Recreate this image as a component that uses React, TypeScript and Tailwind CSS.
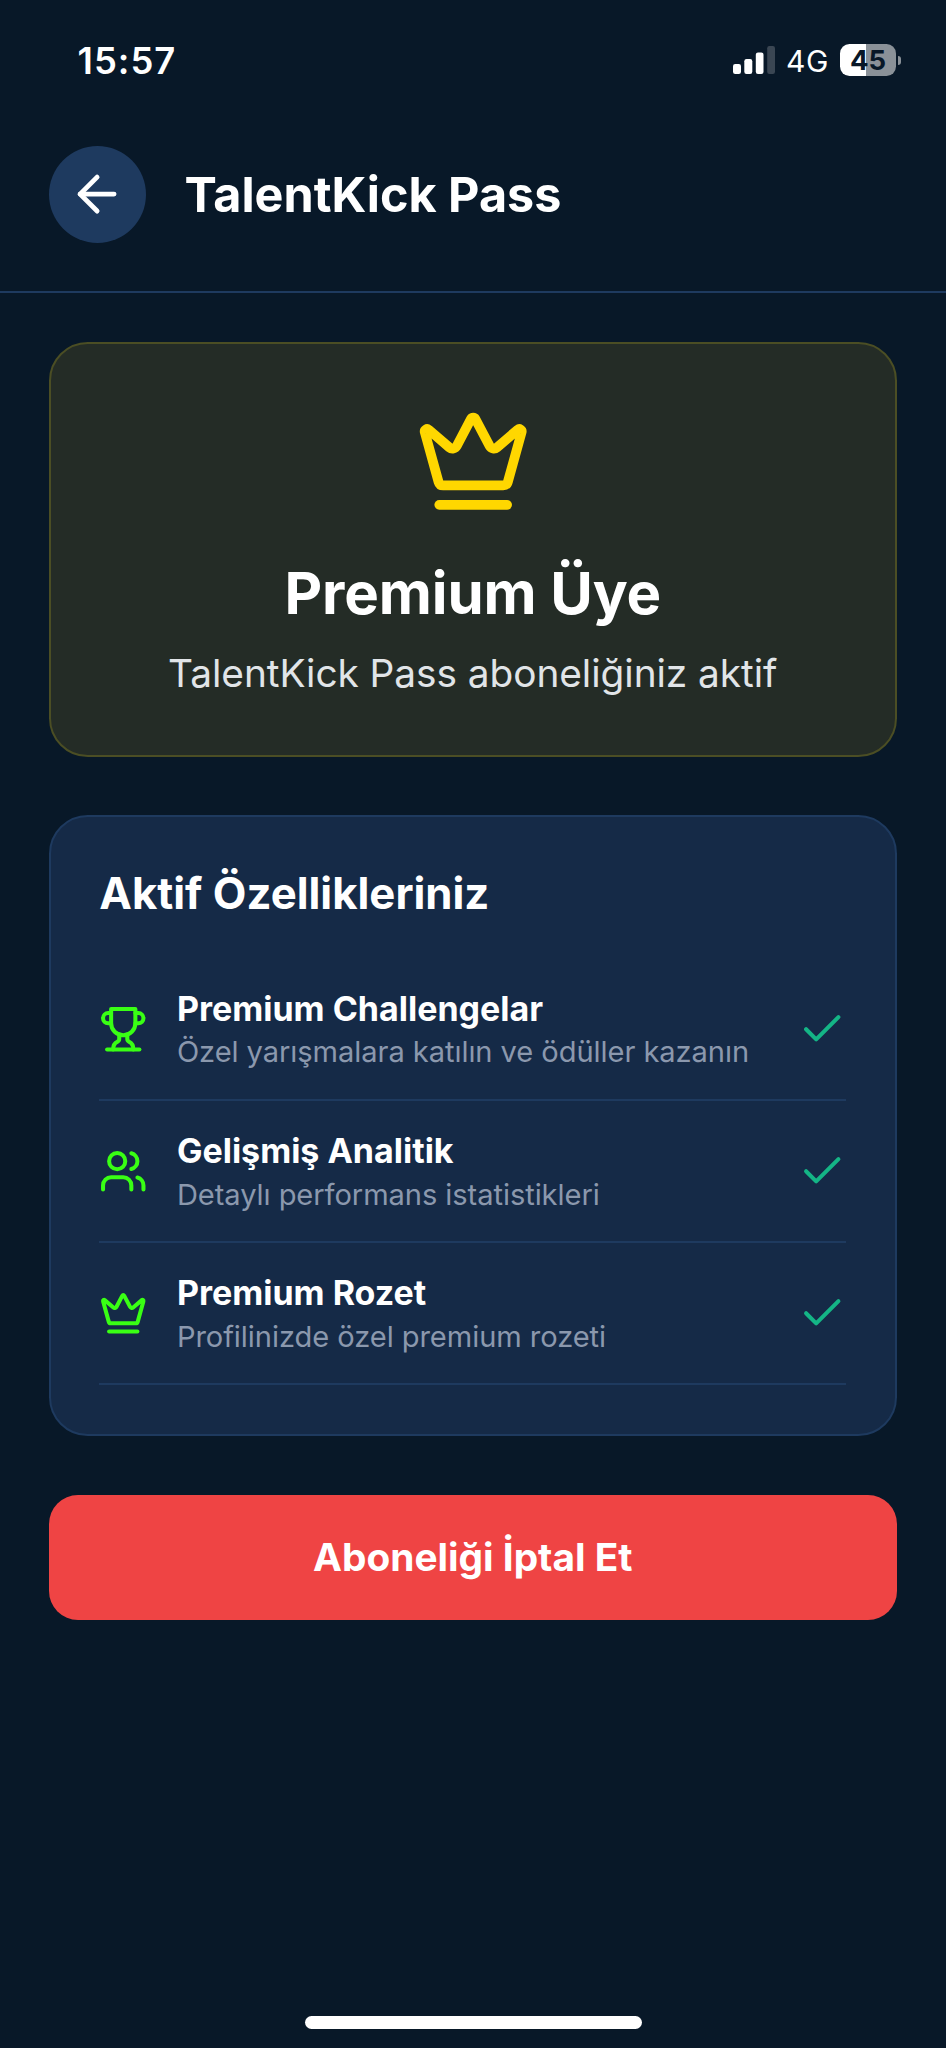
import type { ReactNode } from "react";

type IconProps = { className?: string };

function Icon({ className = "", children }: { className?: string; children: ReactNode }) {
  return (
    <svg
      viewBox="0 0 24 24"
      fill="none"
      stroke="currentColor"
      strokeWidth="2"
      strokeLinecap="round"
      strokeLinejoin="round"
      className={`shrink-0 ${className}`}
    >
      {children}
    </svg>
  );
}

const ArrowLeft = ({ className }: IconProps) => (
  <Icon className={className}>
    <path d="m12 19-7-7 7-7" />
    <path d="M19 12H5" />
  </Icon>
);

const Crown = ({ className }: IconProps) => (
  <Icon className={className}>
    <path d="M11.562 3.266a.5.5 0 0 1 .876 0L15.39 8.87a1 1 0 0 0 1.516.294L21.183 5.5a.5.5 0 0 1 .798.519l-2.834 10.246a1 1 0 0 1-.956.734H5.81a1 1 0 0 1-.957-.734L2.02 6.02a.5.5 0 0 1 .798-.519l4.276 3.664a1 1 0 0 0 1.516-.294z" />
    <path d="M5 21h14" />
  </Icon>
);

const Trophy = ({ className }: IconProps) => (
  <Icon className={className}>
    <path d="M6 9H4.5a2.5 2.5 0 0 1 0-5H6" />
    <path d="M18 9h1.5a2.5 2.5 0 0 0 0-5H18" />
    <path d="M4 22h16" />
    <path d="M10 14.66V17c0 .55-.47.98-.97 1.21C7.85 18.75 7 20.24 7 22" />
    <path d="M14 14.66V17c0 .55.47.98.97 1.21C16.15 18.75 17 20.24 17 22" />
    <path d="M18 2H6v7a6 6 0 0 0 12 0V2Z" />
  </Icon>
);

const Users = ({ className }: IconProps) => (
  <Icon className={className}>
    <path d="M16 21v-2a4 4 0 0 0-4-4H6a4 4 0 0 0-4 4v2" />
    <circle cx="9" cy="7" r="4" />
    <path d="M22 21v-2a4 4 0 0 0-3-3.87" />
    <path d="M16 3.13a4 4 0 0 1 0 7.75" />
  </Icon>
);

const Check = ({ className }: IconProps) => (
  <Icon className={className}>
    <path d="M20 6 9 17l-5-5" />
  </Icon>
);

const features = [
  { icon: Trophy, title: "Premium Challengelar", text: "Özel yarışmalara katılın ve ödüller kazanın" },
  { icon: Users, title: "Gelişmiş Analitik", text: "Detaylı performans istatistikleri" },
  { icon: Crown, title: "Premium Rozet", text: "Profilinizde özel premium rozeti" },
];

function StatusBar() {
  return (
    <div className="flex h-[121px] items-start justify-between pr-[45px] pl-[77.5px]">
      <span className="mt-[39px] text-[36.4px] leading-[44px] font-semibold tracking-[1px]">15:57</span>
      <div className="mt-[44px] flex h-[32px] items-center">
        <svg viewBox="0 0 42 28" className="h-[28px] w-[42px] fill-white">
          <rect x="0" y="18" width="8" height="10" rx="2.2" />
          <rect x="11.3" y="13" width="8" height="15" rx="2.2" />
          <rect x="22.8" y="6.5" width="7.7" height="21.5" rx="2.2" />
          <rect x="34.2" y="0" width="7.8" height="28" rx="2.2" className="fill-[#3a4653]" />
        </svg>
        <span className="ml-[11.5px] w-[54px] pt-[1px] text-[30px] leading-[32px] tracking-[0.6px]">4G</span>
        <div className="flex h-[31.5px] w-[56px] items-center justify-center rounded-[9.5px] bg-[linear-gradient(90deg,#ffffff_47%,#8a9198_47%)] text-[27.5px] leading-[32px] font-bold text-[#081828]">
          45
        </div>
        <div className="ml-[2px] h-[9px] w-[3px] rounded-r-full bg-[#8a9198]" />
      </div>
    </div>
  );
}

export default function App() {
  return (
    <div className="flex h-[2048px] w-full flex-col overflow-hidden bg-[#081828] font-['Inter',sans-serif] text-white">
      <StatusBar />

      <header className="flex h-[172.4px] items-start border-b-2 border-[#1e3a5f] px-[48.5px] pt-[24.5px]">
        <button className="flex size-[97px] shrink-0 items-center justify-center rounded-full bg-[#1e3a5f]">
          <ArrowLeft className="size-[58.2px]" />
        </button>
        <h1 className="ml-[39px] text-[48.5px] leading-[97px] font-bold">TalentKick Pass</h1>
      </header>

      <main className="flex grow flex-col pt-[48.9px] pr-[49px] pl-[48.5px]">
        <section className="flex h-[414.5px] flex-col items-center rounded-[38.8px] border-2 border-[#4b4e24] bg-[#242c26] pt-[58.8px]">
          <Crown className="size-[116.4px] text-[#ffd700]" />
          <h2 className="mt-[38.8px] text-[58.2px] leading-[71px] font-bold tracking-[-0.1px]">Premium Üye</h2>
          <p className="mt-[19.6px] text-[38.8px] leading-[48px] tracking-[-0.05px] text-[#e1e5e8]">
            TalentKick Pass aboneliğiniz aktif
          </p>
        </section>

        <section className="mt-[58.4px] flex h-[621px] flex-col rounded-[38.8px] border-2 border-[#1e3a5f] bg-[#152a47] px-[48.8px] pt-[49.6px]">
          <h3 className="text-[43.7px] leading-[54px] font-bold">Aktif Özellikleriniz</h3>
          <ul className="mt-[37.6px] flex flex-col">
            {features.map(({ icon: FeatureIcon, title, text }) => (
              <li key={title} className="flex h-[142.3px] items-center border-b-2 border-[#1e3a5f] pt-[1px]">
                <FeatureIcon className="size-[48.5px] text-[#39ff14]" />
                <div className="ml-[29.1px] flex grow flex-col gap-[5.4px]">
                  <span className="text-[34px] leading-[40px] font-bold">{title}</span>
                  <span className="text-[29.1px] leading-[35px] tracking-[-0.07px] text-[#8b98ad]">{text}</span>
                </div>
                <Check className="size-[48.5px] text-[#14b586]" />
              </li>
            ))}
          </ul>
        </section>

        <button className="mt-[58.4px] h-[125px] shrink-0 rounded-[29px] bg-[#ef4444] text-[38.8px] font-bold">
          Aboneliği İptal Et
        </button>
      </main>

      <div className="mb-[19px] h-[13px] w-[337px] shrink-0 self-center rounded-full bg-white" />
    </div>
  );
}
